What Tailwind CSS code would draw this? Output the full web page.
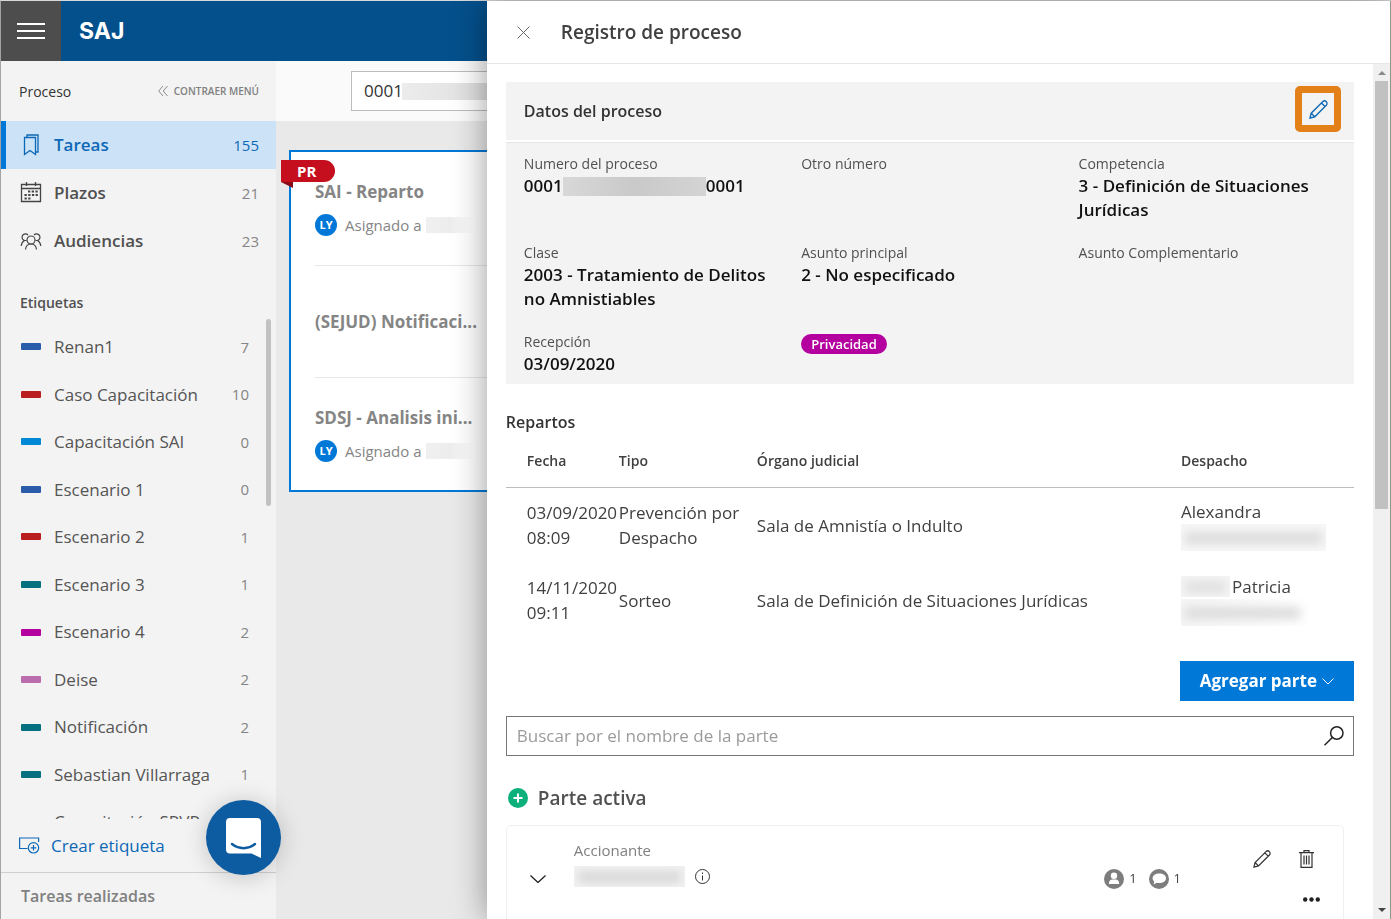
<!DOCTYPE html>
<html lang="es">
<head>
    <meta charset="UTF-8">
    <meta name="viewport" content="width=device-width, initial-scale=1.0">
    <title>SAJ - Registro de proceso</title>
    <script src="https://cdn.jsdelivr.net/npm/@tailwindcss/browser@4"></script>
</head>
<body class="h-screen overflow-hidden bg-[#e9e9e9] font-['Open_Sans','Noto_Sans',sans-serif] text-[#333]">
    <div class="flex h-full flex-col border-t border-l border-t-[#d5d9dc] border-l-[#a3a3a3]">
        <!-- Top bar -->
        <header class="flex h-15 shrink-0 items-center bg-[#04508c]">
            <button aria-label="Menú" class="flex size-15 items-center justify-center bg-[#4d4d4d]">
                <svg class="h-4 w-7" viewBox="0 0 28 16" fill="#fff"><path d="M0 0h28v2H0zM0 7h28v2H0zM0 14h28v2H0z"/></svg>
            </button>
            <a href="#" class="ml-[18px] font-['Inter',sans-serif] text-[23px] font-bold text-white">SAJ</a>
        </header>

        <div class="flex min-h-0 flex-1">
            <!-- Sidebar -->
            <aside class="flex w-[275px] shrink-0 flex-col bg-[#f3f3f3]">
                <div class="flex h-15 shrink-0 items-center justify-between pr-[17px] pl-[18px]">
                    <span class="text-[14px]">Proceso</span>
                    <button class="flex items-center gap-[6px] text-[10px] font-semibold text-[#808080]">
                        <svg class="h-3 w-[10px]" viewBox="0 0 10 12" fill="none" stroke="#8a8a8a"><path d="M5 1L.7 6 5 11M9.500 1L5.200 6l4.300 5"/></svg>
                        CONTRAER MENÚ
                    </button>
                </div>
                <nav class="shrink-0 text-[17px] font-semibold text-[#505050]">
                    <a href="#" class="flex h-12 items-center border-l-[5px] border-[#0078d7] bg-[#cce3f7] pr-[17px] pl-[14px] text-[#0c68b6]">
                        <svg class="size-6" viewBox="0 0 24 24" fill="none" stroke="currentColor" stroke-width="1.300"><path d="M4.500 4.500h11v17l-5.500-4-5.500 4zM7 4.500V2h11v17h-2.500"/></svg>
                        <span class="ml-[10px] flex-1">Tareas</span>
                        <span class="text-[15px] font-normal">155</span>
                    </a>
                    <a href="#" class="flex h-12 items-center border-l-[5px] border-transparent pr-[17px] pl-[14px]">
                        <svg class="size-6" viewBox="0 0 24 24" fill="none" stroke="#444"><path d="M1.500 3.500h19v17h-19zM1.500 7.500h19M6.500 1v4M15.500 1v4" stroke-width="1.300"/><path d="M8 10.500h10M4.500 14h13.500M4.500 17.500h6.500" stroke-width="2.200" stroke-dasharray="2.300 1.400"/></svg>
                        <span class="ml-[10px] flex-1">Plazos</span>
                        <span class="text-[15px] font-normal text-[#858585]">21</span>
                    </a>
                    <a href="#" class="flex h-12 items-center border-l-[5px] border-transparent pr-[17px] pl-[14px]">
                        <svg class="size-6" viewBox="0 0 24 24" fill="none" stroke="#444" stroke-width="1.200"><circle cx="11" cy="11" r="4"/><path d="M5.500 20.500c.3-3.300 2.300-5.500 5.500-5.500s5.200 2.200 5.500 5.500M8 6a3.400 3.400 0 1 0-3.500 5.500C2.500 12.500 1.500 14 1.200 17M4.500 11.500h2M14 6a3.400 3.400 0 1 1 3.500 5.500c2 1 3 2.500 3.300 5.500M17.500 11.500h-2"/></svg>
                        <span class="ml-[10px] flex-1">Audiencias</span>
                        <span class="text-[15px] font-normal text-[#858585]">23</span>
                    </a>
                </nav>
                <h2 class="h-[54px] shrink-0 pt-7 pl-[19px] text-[14px] leading-5 font-semibold text-[#505050]">Etiquetas</h2>
                <div class="relative min-h-0 flex-1 overflow-hidden">
                    <ul id="etiquetas" class="grid h-[527px] auto-rows-fr pt-1 pr-[27px] pl-5"></ul>
                    <div class="absolute top-0 right-[5px] h-[187px] w-[5px] rounded-full bg-[#c2c2c2]"></div>
                </div>
                <a href="#" class="flex h-[53px] shrink-0 items-center gap-[11px] pl-[18px] text-[17px] text-[#0c68b6]">
                    <svg class="h-[17px] w-[21px]" viewBox="0 0 21 17" fill="none" stroke="currentColor" stroke-width="1.200"><path d="M8.500 11.500H.6V1h19v4"/><circle cx="14.500" cy="10.800" r="5.200"/><path d="M14.500 8v5.600M11.700 10.800h5.600"/></svg>
                    Crear etiqueta
                </a>
                <a href="#" class="flex h-[47px] shrink-0 items-center border-t border-[#d0d0d0] pl-5 text-[16px] font-semibold text-[#808080]">Tareas realizadas</a>
            </aside>

            <!-- Board -->
            <main class="min-w-0 flex-1">
                <div class="flex h-15 items-center bg-[#fafafa] px-[75px]">
                    <label class="flex h-10 flex-1 items-center border border-[#bcbcbc] bg-white pl-3">
                        <input type="text" value="0001" aria-label="Número del proceso" class="w-[38px] text-[17px] outline-none">
                        <span class="h-[17px] w-[180px] bg-linear-to-r from-[#ececec] via-[#dedede] to-[#ececec]"></span>
                    </label>
                </div>
                <section class="relative mt-[29px] ml-[13px] w-[420px] border-2 border-[#0078d7] bg-white px-6 text-[#858585]">
                    <div class="absolute top-2 -left-[10px]">
                        <div class="h-[22px] w-[54px] rounded-r-full bg-[#c50f1f] pl-4 text-[15px] leading-[22px] font-bold text-white">PR</div>
                        <svg class="h-[6px] w-3" viewBox="0 0 12 6" fill="#8a0b16"><path d="M0 0h12v6z"/></svg>
                    </div>
                    <div class="flex h-[114px] flex-col justify-center gap-[9px] border-b border-[#e6e6e6]">
                        <h3 class="text-[17px] leading-6 font-bold">SAI - Reparto</h3>
                        <div class="flex items-center gap-2 text-[15px] leading-6">
                            <span class="flex size-[22px] items-center justify-center rounded-full bg-[#0078d7] text-[11px] font-bold text-white">LY</span>
                            Asignado a <span class="-ml-1 h-4 w-12 bg-linear-to-r from-[#f0f0f0] via-[#ededed] to-white"></span>
                        </div>
                    </div>
                    <div class="flex h-[112px] flex-col justify-center border-b border-[#e6e6e6]">
                        <h3 class="text-[17px] leading-6 font-bold whitespace-nowrap">(SEJUD) Notificaci...</h3>
                    </div>
                    <div class="flex h-[112px] flex-col justify-center gap-[9px]">
                        <h3 class="text-[17px] leading-6 font-bold whitespace-nowrap">SDSJ - Analisis ini...</h3>
                        <div class="flex items-center gap-2 text-[15px] leading-6">
                            <span class="flex size-[22px] items-center justify-center rounded-full bg-[#0078d7] text-[11px] font-bold text-white">LY</span>
                            Asignado a <span class="-ml-1 h-4 w-12 bg-linear-to-r from-[#f0f0f0] via-[#ededed] to-white"></span>
                        </div>
                    </div>
                </section>
            </main>
        </div>
    </div>

    <!-- Chat -->
    <button aria-label="Chat" class="fixed bottom-11 left-[206px] flex size-[75px] items-center justify-center rounded-full bg-[#0d5ba1] shadow-[0_2px_24px_rgba(0,0,0,0.2)]">
        <svg class="h-10 w-[35px]" viewBox="0 0 35 40"><path d="M4 0h27a4 4 0 0 1 4 4v36l-9.500-4.500H4a4 4 0 0 1-4-4V4a4 4 0 0 1 4-4z" fill="#fff"/><path d="M6 26c7 5.500 16 5.500 23 0" fill="none" stroke="#0d5ba1" stroke-width="2.500" stroke-linecap="round"/></svg>
    </button>

    <!-- Side panel -->
    <div role="dialog" aria-label="Registro de proceso" class="fixed top-px right-0 bottom-0 flex w-[65%] flex-col border-r border-[#8f9a86] bg-white shadow-[0_0_32px_rgba(0,0,0,0.4)]">
        <div class="flex h-[63px] shrink-0 items-center border-b border-[#e6e6e6] pl-[30px]">
            <button aria-label="Cerrar" class="mr-[31px]">
                <svg class="size-[13px]" viewBox="0 0 13 13" fill="none" stroke="#666"><path d="M.5.5l12 12M12.500.5l-12 12"/></svg>
            </button>
            <h1 class="text-[19px] font-semibold text-[#404040]">Registro de proceso</h1>
        </div>
        <div class="flex min-h-0 flex-1">
            <div class="min-w-0 flex-1 overflow-hidden px-[19px] pt-[18px]">
                <section>
                    <div class="flex h-[58px] items-center justify-between bg-[#f3f3f3] pr-[13px] pl-[18px]">
                        <h2 class="text-[16px] font-semibold text-[#333]">Datos del proceso</h2>
                        <button aria-label="Editar datos" class="-mt-1 flex size-[46px] items-center justify-center rounded-[5px] border-7 border-[#e38118]">
                            <svg class="size-[19px]" viewBox="0 0 19 19" fill="none" stroke="#0c68b6" stroke-width="1.300"><path d="M1 18l1.200-4.800L13.700 1.700a2.200 2.200 0 0 1 3.600 3.600L5.800 16.800zM2.200 13.200l3.600 3.600M12.500 3l3.500 3.500"/></svg>
                        </button>
                    </div>
                    <dl class="mt-[2px] grid grid-cols-3 gap-x-5 gap-y-5 border-t border-[#e4e4e4] bg-[#f3f3f3] px-[18px] pt-[10px] pb-2 text-[17px] leading-6 font-semibold text-[#111]">
                        <div>
                            <dt class="text-[14px] leading-[21px] font-normal text-[#505050]">Numero del proceso</dt>
                            <dd class="flex items-center">0001<span class="h-[19px] w-[143px] bg-linear-to-r from-[#d8d8d8] via-[#c9c9c9] to-[#d4d4d4]"></span>0001</dd>
                        </div>
                        <div>
                            <dt class="text-[14px] leading-[21px] font-normal text-[#505050]">Otro número</dt>
                        </div>
                        <div>
                            <dt class="text-[14px] leading-[21px] font-normal text-[#505050]">Competencia</dt>
                            <dd>3 - Definición de Situaciones Jurídicas</dd>
                        </div>
                        <div>
                            <dt class="text-[14px] leading-[21px] font-normal text-[#505050]">Clase</dt>
                            <dd>2003 - Tratamiento de Delitos no Amnistiables</dd>
                        </div>
                        <div>
                            <dt class="text-[14px] leading-[21px] font-normal text-[#505050]">Asunto principal</dt>
                            <dd>2 - No especificado</dd>
                        </div>
                        <div>
                            <dt class="text-[14px] leading-[21px] font-normal text-[#505050]">Asunto Complementario</dt>
                        </div>
                        <div>
                            <dt class="text-[14px] leading-[21px] font-normal text-[#505050]">Recepción</dt>
                            <dd>03/09/2020</dd>
                        </div>
                        <div>
                            <dd class="mt-[3px] w-fit rounded-full bg-[#b4009e] px-[10px] text-[13px] leading-5 font-semibold text-white">Privacidad</dd>
                        </div>
                    </dl>
                </section>

                <h2 class="mt-[26px] text-[16px] leading-6 font-semibold text-[#333]">Repartos</h2>
                <table class="w-full table-fixed text-left text-[17px] leading-[25px] text-[#404040]">
                    <thead>
                        <tr class="h-[53px] border-b border-[#bdbdbd] text-[14px] text-[#404040]">
                            <th class="w-[113px] pl-[21px] font-semibold">Fecha</th>
                            <th class="w-[138px] font-semibold">Tipo</th>
                            <th class="font-semibold">Órgano judicial</th>
                            <th class="w-[173px] font-semibold">Despacho</th>
                        </tr>
                    </thead>
                    <tbody>
                        <tr class="h-[76px]">
                            <td class="pl-[21px]">03/09/2020 08:09</td>
                            <td>Prevención por Despacho</td>
                            <td>Sala de Amnistía o Indulto</td>
                            <td>Alexandra
                                <div class="flex h-[27px] w-[145px] items-center overflow-hidden bg-[#f7f7f7]"><span class="mx-1 h-3 w-full bg-[#dcdcdc] blur-[5px]"></span></div>
                            </td>
                        </tr>
                        <tr class="h-[74px]">
                            <td class="pl-[21px]">14/11/2020 09:11</td>
                            <td>Sorteo</td>
                            <td>Sala de Definición de Situaciones Jurídicas</td>
                            <td>
                                <div class="flex items-center gap-[2px]"><span class="flex h-[21px] w-[49px] items-center overflow-hidden bg-[#f5f5f5]"><span class="mx-1 h-3 w-full bg-[#e0e0e0] blur-[5px]"></span></span>Patricia</div>
                                <div class="flex h-[27px] w-[130px] items-center overflow-hidden bg-linear-to-r from-[#f5f5f5] to-white"><span class="mx-1 h-3 w-[115px] bg-[#dcdcdc] blur-[5px]"></span></div>
                            </td>
                        </tr>
                    </tbody>
                </table>

                <button class="mt-6 ml-auto flex h-10 items-center gap-[5px] bg-[#0078d7] px-5 text-[17px] font-bold whitespace-nowrap text-white">
                    Agregar parte
                    <svg class="h-[7px] w-3" viewBox="0 0 12 7" fill="none" stroke="#fff"><path d="M.5.5L6 6 11.500.5"/></svg>
                </button>
                <label class="mt-[15px] flex h-10 items-center border border-[#767676] pr-[9px] pl-[10px]">
                    <input type="text" placeholder="Buscar por el nombre de la parte" aria-label="Buscar parte" class="flex-1 text-[17px] outline-none placeholder:text-[#9b9b9b]">
                    <svg class="size-5" viewBox="0 0 20 20" fill="none" stroke="#222" stroke-width="1.500"><circle cx="12.800" cy="7" r="6.200"/><path d="M8.300 11.500L.5 19.300"/></svg>
                </label>

                <div class="mt-[30px] flex items-center gap-[10px] pl-[2px]">
                    <svg class="size-5" viewBox="0 0 20 20"><circle cx="10" cy="10" r="10" fill="#0bb07b"/><path d="M10 5.500v9M5.500 10h9" stroke="#fff" stroke-width="2"/></svg>
                    <h2 class="text-[19px] leading-6 font-semibold text-[#505050]">Parte activa</h2>
                </div>
                <article class="mt-[15px] mr-[10px] flex h-[120px] rounded-[5px] border border-[#f0f0f0] px-[23px]">
                    <button aria-label="Expandir" class="mt-[49px] h-2">
                        <svg class="h-2 w-4" viewBox="0 0 16 8" fill="none" stroke="#222" stroke-width="1.300"><path d="M.5.5L8 7.500 15.500.5"/></svg>
                    </button>
                    <div class="ml-7 flex-1 pt-3">
                        <p class="text-[15px] leading-6 text-[#808080]">Accionante</p>
                        <div class="mt-1 flex items-center gap-[10px]">
                            <span class="flex h-[21px] w-[111px] items-center overflow-hidden bg-[#f3f3f3]"><span class="mx-1 h-3 w-full bg-[#d8d8d8] blur-[5px]"></span></span>
                            <svg class="size-[15px]" viewBox="0 0 15 15" fill="none" stroke="#333"><circle cx="7.500" cy="7.500" r="7"/><path d="M7.500 6.500v5M7.500 3.500v1.500"/></svg>
                        </div>
                    </div>
                    <div class="mt-[43px] flex h-5 items-center gap-[5px] text-[13px] text-[#444]">
                        <svg class="size-5" viewBox="0 0 20 20"><circle cx="10" cy="10" r="10" fill="#7d7d7d"/><circle cx="10" cy="6.800" r="3.200" fill="#fff"/><path d="M4.800 15c0-3.200 1.700-4.600 3.400-4.600h3.600c1.700 0 3.400 1.400 3.400 4.600z" fill="#fff"/></svg>
                        1
                        <svg class="ml-[7px] size-5" viewBox="0 0 20 20"><circle cx="10" cy="10" r="10" fill="#7d7d7d"/><path d="M10.300 4.500c3.700 0 6.700 2 6.700 4.800s-3 4.800-6.700 4.800c-.9 0-1.700-.1-2.500-.3L4.500 15.500l.8-3C4.200 11.600 3.600 10.500 3.600 9.300c0-2.800 3-4.800 6.700-4.800z" fill="#fff"/></svg>
                        1
                    </div>
                    <div class="ml-[72px] grid h-fit grid-cols-2 items-center gap-x-[25px] gap-y-[29px] pt-6">
                        <button aria-label="Editar parte">
                            <svg class="size-[18px]" viewBox="0 0 19 19" fill="none" stroke="#333" stroke-width="1.300"><path d="M1 18l1.200-4.800L13.700 1.700a2.200 2.200 0 0 1 3.600 3.600L5.800 16.800zM2.200 13.200l3.600 3.600M12.500 3l3.500 3.500"/></svg>
                        </button>
                        <button aria-label="Eliminar parte">
                            <svg class="h-[18px] w-[15px]" viewBox="0 0 15 18" fill="none" stroke="#333" stroke-width="1.200"><path d="M0 2.600h15M5 2.500V.6h5v1.900M2 2.600v14.800h11V2.600M5 5.500v9M7.500 5.500v9M10 5.500v9"/></svg>
                        </button>
                        <button aria-label="Más opciones" class="col-start-2 pl-1">
                            <svg class="h-[5px] w-[17px]" viewBox="0 0 17 5" fill="#222"><circle cx="2.200" cy="2.500" r="2.200"/><circle cx="8.500" cy="2.500" r="2.200"/><circle cx="14.800" cy="2.500" r="2.200"/></svg>
                        </button>
                    </div>
                </article>
            </div>
            <!-- Scrollbar -->
            <div class="flex w-[17px] shrink-0 flex-col items-center bg-[#f0f0f0]">
                <svg class="h-[17px] w-4" viewBox="0 0 16 17" fill="#8a8a8a"><path d="M4 11l4-4 4 4z"/></svg>
                <div class="h-[428px] w-[13px] bg-[#c1c1c1]"></div>
                <svg class="mt-auto h-[17px] w-4" viewBox="0 0 16 17" fill="#444"><path d="M4 6h8l-4 4z"/></svg>
            </div>
        </div>
    </div>

    <script>
        const etiquetas = [
            ['Renan1', 7, 'bg-[#2b5caa]'],
            ['Caso Capacitación', 10, 'bg-[#b91d1d]'],
            ['Capacitación SAI', 0, 'bg-[#0088d4]'],
            ['Escenario 1', 0, 'bg-[#2b5caa]'],
            ['Escenario 2', 1, 'bg-[#b91d1d]'],
            ['Escenario 3', 1, 'bg-[#037080]'],
            ['Escenario 4', 2, 'bg-[#b4009e]'],
            ['Deise', 2, 'bg-[#bb6cad]'],
            ['Notificación', 2, 'bg-[#037080]'],
            ['Sebastian Villarraga', 1, 'bg-[#037080]'],
            ['Capacitación SRVR', '', 'bg-[#037080]']
        ];

        document.getElementById('etiquetas').innerHTML = etiquetas.map(([nombre, total, color]) => `
            <li class="flex items-center">
                <span class="h-[7px] w-5 rounded-[1px] ${color}"></span>
                <a href="#" class="ml-[13px] flex-1 whitespace-nowrap text-[17px] text-[#555]">${nombre}</a>
                <span class="text-[15px] text-[#858585]">${total}</span>
            </li>
        `).join('');
    </script>
</body>
</html>
